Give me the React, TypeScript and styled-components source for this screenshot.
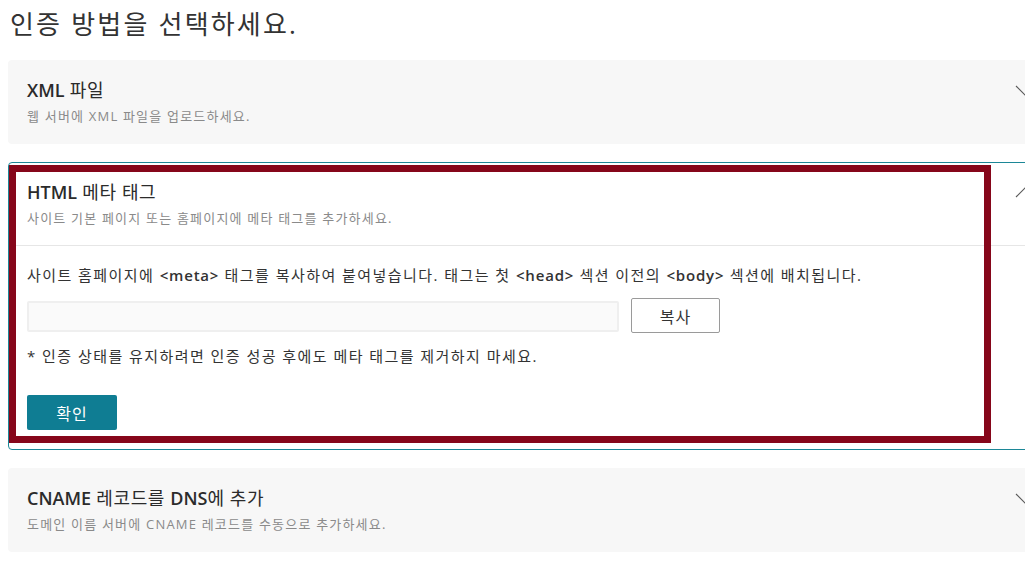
import React from "react";
import styled, { createGlobalStyle } from "styled-components";

const GlobalStyle = createGlobalStyle`
  html, body {
    margin: 0;
    padding: 0;
    overflow: hidden;
    background: #ffffff;
  }
  body {
    font-family: "Open Sans", "Noto Sans CJK KR", sans-serif;
    color: #333333;
  }
`;

const Page = styled.div`
  padding: 7px 8px 0 8px;
  display: flex;
  flex-direction: column;
  gap: 19px;
`;

const Heading = styled.h1`
  margin: 0;
  padding-left: 2px;
  font-size: 26px;
  line-height: 34px;
  font-weight: 400;
  letter-spacing: 2.2px;
  color: #333333;
`;

const CardList = styled.div`
  display: flex;
  flex-direction: column;
  gap: 18px;
`;

const Card = styled.section<{ $open?: boolean }>`
  position: relative;
  width: 1052px;
  box-sizing: border-box;
  border-radius: 4px;
  border: 1px solid ${(p) => (p.$open ? "#1c8797" : "transparent")};
  background: ${(p) => (p.$open ? "#ffffff" : "#f7f7f7")};
`;

const Header = styled.div`
  padding: 17px 24px 17px 18px;
`;

const TitleRow = styled.div`
  display: flex;
  align-items: center;
  justify-content: space-between;
  height: 24px;
`;

const Title = styled.h2`
  margin: 0;
  font-size: 18px;
  line-height: 24px;
  font-weight: 400;
  letter-spacing: 0.6px;
  color: #2b2b2b;
`;

const Latin = styled.span<{ $spacing?: number }>`
  font-weight: 600;
  letter-spacing: ${(p) => p.$spacing ?? 0}px;
`;

const Subtitle = styled.p`
  margin: 4px 0 0 0;
  font-size: 13px;
  line-height: 20px;
  letter-spacing: 1.2px;
  color: #8a8a8a;
`;

const Chevron = styled.svg`
  display: block;
  width: 20px;
  height: 11px;
  flex: none;
`;

const Body = styled.div`
  border-top: 1px solid #e6e6e6;
  padding: 19px 20px 19px 18px;
  display: flex;
  flex-direction: column;
`;

const BodyText = styled.p`
  margin: 0;
  font-size: 15px;
  line-height: 20px;
  letter-spacing: 1.45px;
  color: #333333;
`;

const CopyRow = styled.div`
  display: flex;
  align-items: center;
  gap: 12px;
  margin-top: 13px;
  height: 35px;
`;

const CodeInput = styled.input`
  width: 592px;
  height: 31px;
  box-sizing: border-box;
  border: 2px solid #efefef;
  border-radius: 2px;
  background: #fafafa;
  margin-top: 1px;
  padding: 0 8px;
  font-family: inherit;
  font-size: 13px;
  outline: none;
`;

const CopyButton = styled.button`
  width: 89px;
  height: 35px;
  box-sizing: border-box;
  border: 1px solid #9a9a9a;
  border-radius: 2px;
  background: #ffffff;
  font-family: inherit;
  font-size: 16px;
  letter-spacing: 1px;
  color: #333333;
  cursor: pointer;
`;

const Note = styled(BodyText)`
  margin-top: 13px;
`;

const ConfirmButton = styled.button`
  margin-top: 29px;
  width: 90px;
  height: 35px;
  border: none;
  border-radius: 2px;
  background: #0f7d93;
  color: #ffffff;
  font-family: inherit;
  font-size: 16px;
  letter-spacing: 1px;
  cursor: pointer;
`;

const Highlight = styled.div`
  position: absolute;
  left: 0;
  top: 2px;
  width: 982px;
  height: 278px;
  box-sizing: border-box;
  border: 7px solid #86061a;
  pointer-events: none;
`;

const ChevronIcon = ({ up }: { up?: boolean }) => (
  <Chevron viewBox="0 0 20 11" aria-hidden="true">
    <path
      d={up ? "M1 10 L10 1 L19 10" : "M1 1 L10 10 L19 1"}
      fill="none"
      stroke="#5a5a5a"
      strokeWidth="1.1"
    />
  </Chevron>
);

export default function App() {
  return (
    <>
      <GlobalStyle />
      <Page>
        <Heading>인증 방법을 선택하세요.</Heading>
        <CardList>
          <Card>
            <Header>
              <TitleRow>
                <Title>
                  <Latin>XML</Latin> 파일
                </Title>
                <ChevronIcon />
              </TitleRow>
              <Subtitle>웹 서버에 XML 파일을 업로드하세요.</Subtitle>
            </Header>
          </Card>

          <Card $open>
            <Header>
              <TitleRow>
                <Title>
                  <Latin>HTML</Latin> 메타 태그
                </Title>
                <ChevronIcon up />
              </TitleRow>
              <Subtitle>사이트 기본 페이지 또는 홈페이지에 메타 태그를 추가하세요.</Subtitle>
            </Header>
            <Body>
              <BodyText>
                사이트 홈페이지에 <Latin $spacing={0.8}>&lt;meta&gt;</Latin> 태그를 복사하여 붙여넣습니다. 태그는 첫{" "}
                <Latin $spacing={0.8}>&lt;head&gt;</Latin> 섹션 이전의 <Latin $spacing={0.8}>&lt;body&gt;</Latin> 섹션에 배치됩니다.
              </BodyText>
              <CopyRow>
                <CodeInput readOnly value="" />
                <CopyButton>복사</CopyButton>
              </CopyRow>
              <Note>* 인증 상태를 유지하려면 인증 성공 후에도 메타 태그를 제거하지 마세요.</Note>
              <div>
                <ConfirmButton>확인</ConfirmButton>
              </div>
            </Body>
            <Highlight />
          </Card>

          <Card>
            <Header>
              <TitleRow>
                <Title>
                  <Latin>CNAME</Latin> 레코드를 <Latin>DNS</Latin>에 추가
                </Title>
                <ChevronIcon />
              </TitleRow>
              <Subtitle>도메인 이름 서버에 CNAME 레코드를 수동으로 추가하세요.</Subtitle>
            </Header>
          </Card>
        </CardList>
      </Page>
    </>
  );
}
